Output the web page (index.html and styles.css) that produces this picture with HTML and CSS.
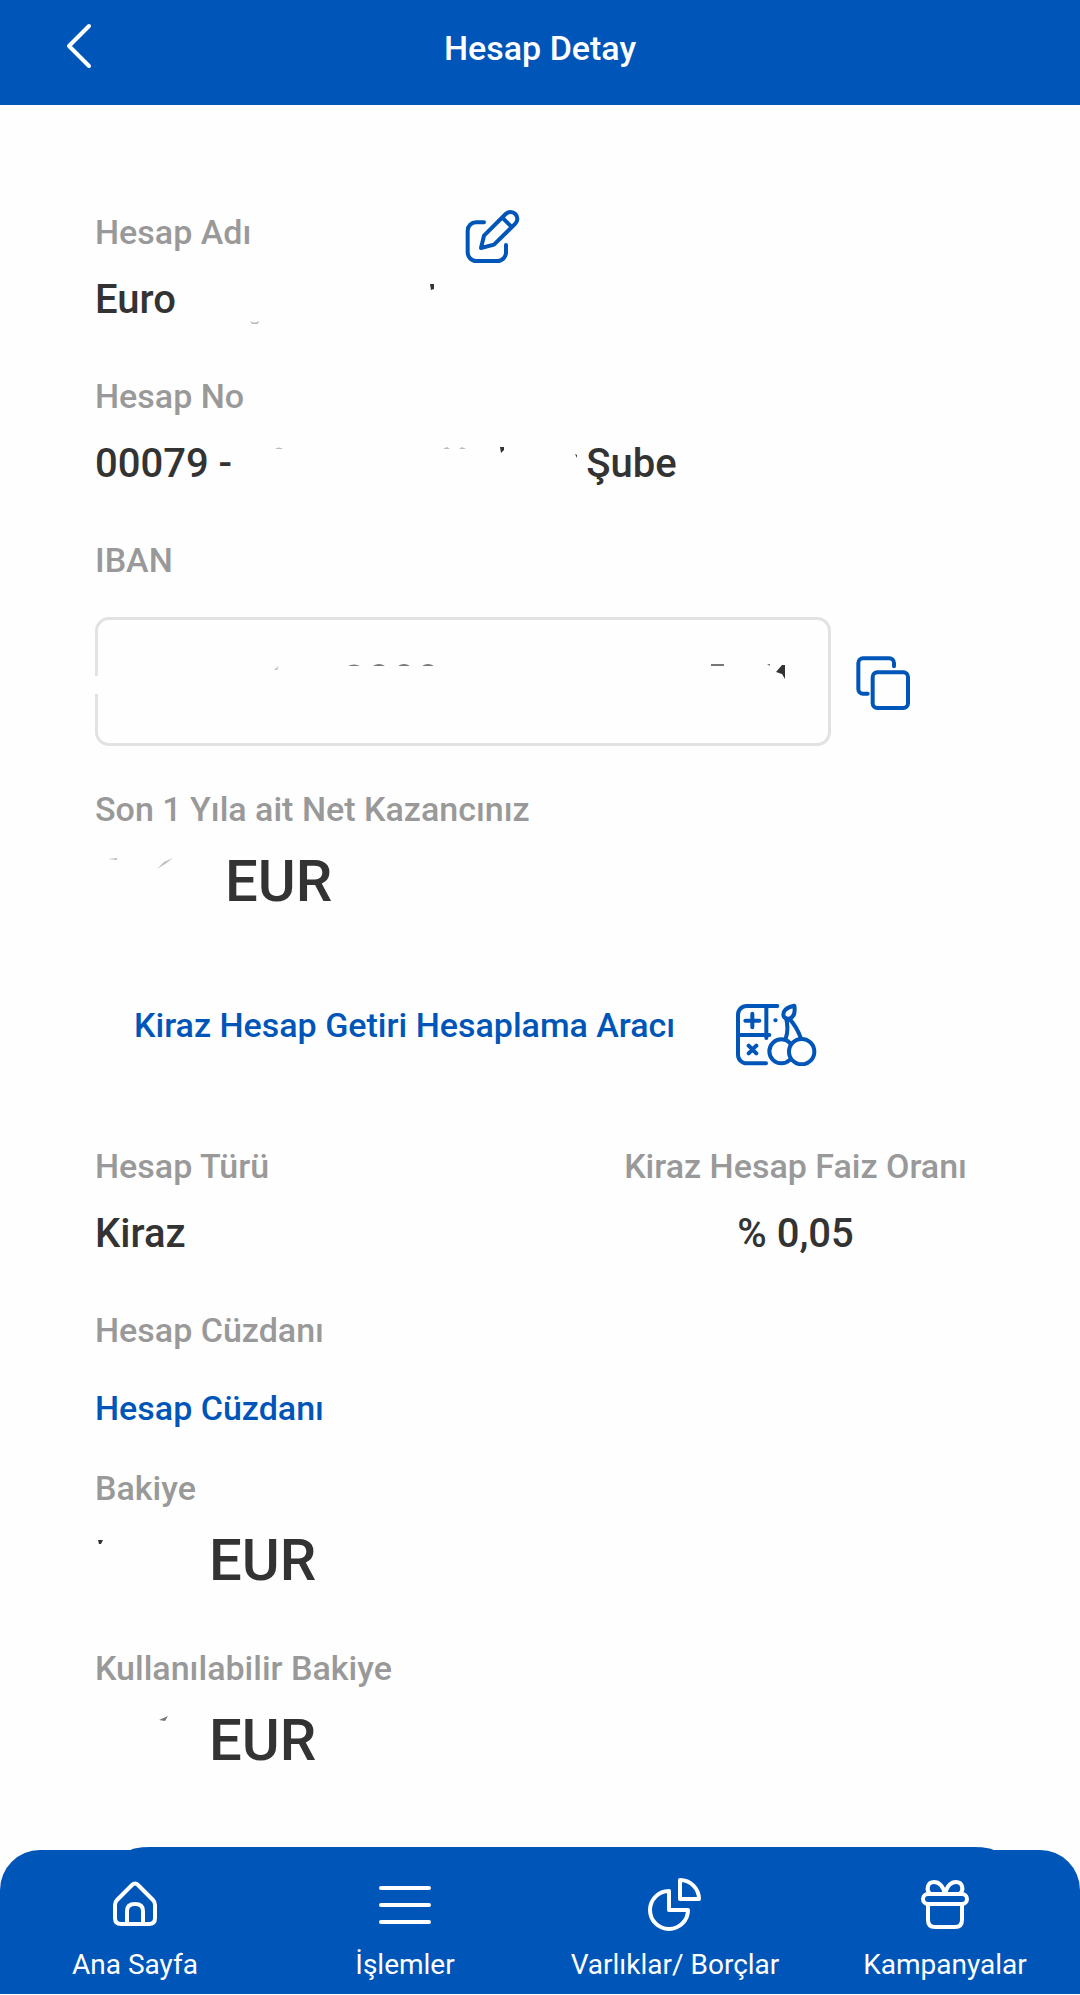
FILE: index.html
```html
<!DOCTYPE html>
<html lang="tr">
<head>
    <meta charset="UTF-8">
    <meta name="viewport" content="width=device-width, initial-scale=1.0">
    <title>Hesap Detay</title>
    <link rel="stylesheet" href="styles.css">
</head>
<body>
    <header class="topbar">
        <button type="button" class="icon-btn back" aria-label="Geri">
            <svg width="32" height="48" viewBox="0 0 32 48"><path d="M25 4 5 24l20 20"/></svg>
        </button>
        <h1>Hesap Detay</h1>
    </header>

    <main>
        <section class="name-row">
            <div class="field">
                <h2 class="label">Hesap Adı</h2>
                <p class="value">Euro
                    <svg class="mask" width="252" height="56" viewBox="0 0 252 56"><path class="faint" d="M66 49q4 3 9 0l-1 3h-6z"/><path d="M246 12h4v5l-3 1z"/></svg>
                </p>
            </div>
            <button type="button" class="icon-btn" aria-label="Hesap adını düzenle">
                <svg class="line" width="57" height="57" viewBox="72 57 171 171"><path d="M132 100h-24a25 25 0 0 0-25 25v65a26 26 0 0 0 26 26h63a26 26 0 0 0 26-26v-22M123 177l9-37 65-65a19 19 0 0 1 29 29l-64 63zM187 86l27 27"/></svg>
            </button>
        </section>

        <section class="field">
            <h2 class="label">Hesap No</h2>
            <p class="value">00079 -
                <svg class="mask" width="338" height="56" viewBox="-6 0 338 56"><path class="faint" d="M29 13q4-3 8 0zM197 13l4-2 3 2zM213 13l3-2 4 2z"/><path d="M254 11h4v3l-3 3zM329 18l2 1v3z"/></svg>
                Şube
            </p>
        </section>

        <section class="iban">
            <h2 class="label">IBAN</h2>
            <div class="iban-row">
                <div class="iban-box">
                    <svg class="mask" width="560" height="24" viewBox="0 0 560 24"><path class="faint" d="M32 8l5-4-2 4z"/><path class="soft" d="M106 4q6-3 12 0zM131 4q6-4 12 0zM156 4q6-4 12 0zM180 4q6-4 12 0zM469 2h13v2h-13zM525 2h3v2z"/><path d="M534 10l6-7h3v14l-3-5z"/></svg>
                </div>
                <button type="button" class="icon-btn" aria-label="IBAN kopyala">
                    <svg class="line" width="57" height="57" viewBox="48 42 171 171"><path d="M86 164H72a14 14 0 0 1-14-14V72a14 14 0 0 1 14-14h79a14 14 0 0 1 14 14v10"/><rect x="101" y="100" width="106" height="107" rx="14"/></svg>
                </button>
            </div>
        </section>

        <section class="field amount">
            <h2 class="label">Son 1 Yıla ait Net Kazancınız</h2>
            <p class="value">
                <svg class="mask" width="130" height="72" viewBox="0 0 130 72"><path class="faint" d="M13 14l9-1v2zM78 13l-9 4-7 7 8-5z"/></svg>
                EUR
            </p>
        </section>

        <a class="tool" href="#">
            Kiraz Hesap Getiri Hesaplama Aracı
            <svg class="line" width="83" height="65" viewBox="69 54 249 195">
                <path d="M196 69h-92a26 26 0 0 0-26 26v120a26 26 0 0 0 26 26h58M78 156h94M163 69v96M121 92v41M100 113h42M110 188l23 23M133 188l-23 23M190 112h1"/>
                <path d="M215 100c-4-15 7-27 32-32 3 20-2 35-15 39-7 1-13-1-17-7zM222 105c6 22 6 42-1 62M232 107c16 18 27 36 35 60"/>
                <circle class="fruit" cx="208" cy="205" r="36"/>
                <circle class="fruit" cx="269" cy="206" r="38"/>
            </svg>
        </a>

        <div class="pair">
            <section class="field">
                <h2 class="label">Hesap Türü</h2>
                <p class="value">Kiraz</p>
            </section>
            <section class="field rate">
                <h2 class="label">Kiraz Hesap Faiz Oranı</h2>
                <p class="value">% 0,05</p>
            </section>
        </div>

        <section class="book">
            <h2 class="label">Hesap Cüzdanı</h2>
            <a class="link" href="#">Hesap Cüzdanı</a>
        </section>

        <section class="field amount">
            <h2 class="label">Bakiye</h2>
            <p class="value">
                <svg class="mask" width="114" height="72" viewBox="0 0 114 72"><path d="M3 16h5l-2 4H4z"/></svg>
                EUR
            </p>
        </section>

        <section class="field amount">
            <h2 class="label">Kullanılabilir Bakiye</h2>
            <p class="value">
                <svg class="mask" width="114" height="72" viewBox="0 0 114 72"><path class="soft" d="M64 16l9-4-3 5z"/></svg>
                EUR
            </p>
        </section>
    </main>

    <nav class="tabs">
        <a href="#">
            <svg width="56" height="56" viewBox="0 0 56 56"><path d="M25 8Q28 5 31 8L46 23Q48 25 48 28v13q0 6-6 6H14q-6 0-6-6V28q0-3 2-5zM20 47V34q0-7 8-7t8 7v13"/></svg>
            Ana Sayfa
        </a>
        <a href="#">
            <svg width="56" height="56" viewBox="0 0 56 56"><path d="M4 11h48M4 28h48M4 45h48"/></svg>
            İşlemler
        </a>
        <a href="#">
            <svg width="56" height="56" viewBox="0 0 56 56"><path d="M22 14v19h19A19 19 0 1 1 22 14zM33 3v19h19A19 19 0 0 0 33 3z"/></svg>
            Varlıklar/ Borçlar
        </a>
        <a href="#">
            <svg width="56" height="56" viewBox="0 0 56 56"><rect x="6" y="17" width="44" height="10" rx="5"/><path d="M11 27v16q0 7 7 7h20q7 0 7-7V27M28 17C26 9 22 5 17 5c-7 0-8 8-4 12M28 17c2-8 6-12 11-12 7 0 8 8 4 12"/></svg>
            Kampanyalar
        </a>
    </nav>
</body>
</html>
```

FILE: styles.css
```css
* {
    box-sizing: border-box;
}
body {
    margin: 0;
    min-height: 100vh;
    padding-bottom: 1px;
    display: flex;
    flex-direction: column;
    background-color: #fefefe;
    color: #333;
    font-family: Roboto, sans-serif;
}
h1, h2, p {
    margin: 0;
    font-weight: 500;
}
a {
    color: #0055b8;
    text-decoration: none;
}
svg {
    display: block;
    flex: none;
    fill: none;
    stroke: white;
    stroke-width: 4;
    stroke-linecap: round;
    stroke-linejoin: round;
}
.icon-btn {
    padding: 0;
    border: 0;
    background: none;
    cursor: pointer;
}
.topbar {
    display: grid;
    grid-template-columns: 1fr auto 1fr;
    height: 105px;
    padding: 22px 64px 0;
    background-color: #0055b8;
    color: white;
}
.topbar h1 {
    font-size: 34px;
    line-height: 52px;
}
.back {
    justify-self: start;
    align-self: start;
}
main {
    flex: 1;
    padding: 103px 95px 24px;
}
.line {
    stroke: #0055b8;
    stroke-width: 12;
}
.fruit {
    fill: #fefefe;
}
.label {
    color: #999;
    font-size: 34px;
    line-height: 48px;
}
.field {
    margin-bottom: 44px;
}
.value {
    display: flex;
    gap: 8px;
    margin-top: 16px;
    font-size: 40px;
    line-height: 56px;
}
/* leftovers of the hidden values */
.mask {
    fill: #333;
    stroke: none;
}
.mask .soft {
    fill: #777;
}
.mask .faint {
    fill: #bbb;
}
.name-row {
    display: flex;
    align-items: flex-start;
    gap: 28px;
}
.iban-row {
    display: flex;
    align-items: center;
    gap: 24px;
    margin: 33px 0 39px;
    padding-right: 73px;
}
.iban-box {
    position: relative;
    flex: 1;
    height: 129px;
    padding: 42px 0 0 144px;
    border: 3px solid #e2e2e2;
    border-radius: 14px;
}
/* the left edge is wiped where the number starts */
.iban-box::before {
    content: "";
    position: absolute;
    top: 56px;
    left: -3px;
    width: 3px;
    height: 18px;
    background-color: #fefefe;
}
.amount {
    margin-bottom: 48px;
}
.amount .value {
    gap: 0;
    margin-top: 12px;
    font-size: 58px;
    line-height: 72px;
}
.tool {
    display: flex;
    gap: 60px;
    margin: 84px 0 76px 39px;
    font-size: 34px;
    font-weight: 500;
    line-height: 48px;
}
.pair {
    display: flex;
    justify-content: space-between;
    padding-right: 18px;
}
.rate .value {
    justify-content: center;
}
.link {
    display: block;
    margin: 30px 0 32px;
    font-size: 34px;
    font-weight: 500;
    line-height: 48px;
}
.tabs {
    position: relative;
    display: grid;
    grid-template-columns: repeat(4, 1fr);
    height: 144px;
    padding-top: 27px;
    border-radius: 40px 40px 0 0;
    background-color: #0055b8;
}
/* raised middle part of the bar */
.tabs::before {
    content: "";
    position: absolute;
    top: -3px;
    left: 12%;
    right: 8%;
    height: 12px;
    border-radius: 20px 20px 0 0 / 4px 4px 0 0;
    background-color: #0055b8;
}
.tabs a {
    display: flex;
    flex-direction: column;
    align-items: center;
    gap: 12px;
    color: white;
    font-size: 28px;
    line-height: 40px;
}
```
